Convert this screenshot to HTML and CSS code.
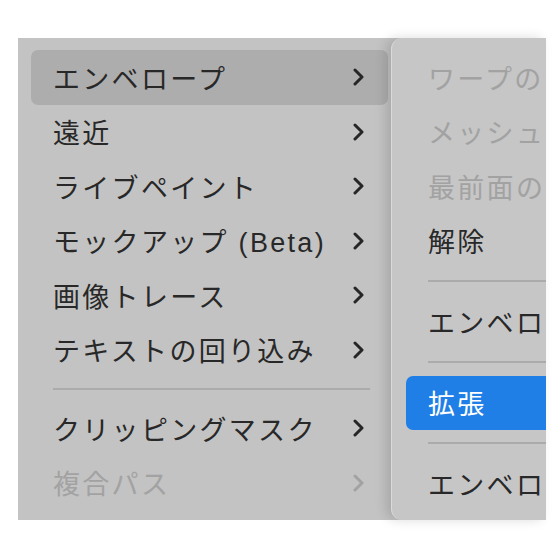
FILE: index.html
```html
<!DOCTYPE html>
<html lang="ja">
<head>
<meta charset="utf-8">
<link rel="stylesheet" href="styles.css">
</head>
<body>
<div class="stage">
  <div class="menu main">
    <div class="item active"><span class="label">エンベロープ</span><svg class="chev" viewBox="0 0 11 18"><path d="M2 2 L9 9 L2 16"/></svg></div>
    <div class="item"><span class="label">遠近</span><svg class="chev" viewBox="0 0 11 18"><path d="M2 2 L9 9 L2 16"/></svg></div>
    <div class="item"><span class="label">ライブペイント</span><svg class="chev" viewBox="0 0 11 18"><path d="M2 2 L9 9 L2 16"/></svg></div>
    <div class="item"><span class="label">モックアップ (Beta)</span><svg class="chev" viewBox="0 0 11 18"><path d="M2 2 L9 9 L2 16"/></svg></div>
    <div class="item"><span class="label">画像トレース</span><svg class="chev" viewBox="0 0 11 18"><path d="M2 2 L9 9 L2 16"/></svg></div>
    <div class="item"><span class="label">テキストの回り込み</span><svg class="chev" viewBox="0 0 11 18"><path d="M2 2 L9 9 L2 16"/></svg></div>
    <div class="sep main-sep"></div>
    <div class="item"><span class="label">クリッピングマスク</span><svg class="chev" viewBox="0 0 11 18"><path d="M2 2 L9 9 L2 16"/></svg></div>
    <div class="item disabled"><span class="label">複合パス</span><svg class="chev" viewBox="0 0 11 18"><path d="M2 2 L9 9 L2 16"/></svg></div>
  </div>
  <div class="menu sub">
    <div class="item disabled"><span class="label">ワープの</span></div>
    <div class="item disabled"><span class="label">メッシュ</span></div>
    <div class="item disabled"><span class="label">最前面の</span></div>
    <div class="item"><span class="label">解除</span></div>
    <div class="sep"></div>
    <div class="item"><span class="label">エンベロ</span></div>
    <div class="sep"></div>
    <div class="item selected"><span class="label">拡張</span></div>
    <div class="sep"></div>
    <div class="item"><span class="label">エンベロ</span></div>
  </div>
</div>
</body>
</html>
```

FILE: styles.css
```css
html, body {
  margin: 0;
  padding: 0;
  background: #ffffff;
}
body {
  width: 560px;
  height: 560px;
  overflow: hidden;
  font-family: "Liberation Sans", "Noto Sans CJK JP", sans-serif;
  font-size: 27px;
  color: #282828;
}
.stage {
  position: relative;
  padding: 38px 0 0 18px;
}
.menu {
  box-sizing: border-box;
  background: #c3c3c3;
  display: flex;
  flex-direction: column;
}
.main {
  width: 383px;
  height: 482px;
  padding: 12px 13px 10px 13px;
}
.item {
  height: 54.5px;
  flex: none;
  display: flex;
  align-items: center;
  justify-content: space-between;
  padding: 0 13px 0 22px;
  box-sizing: border-box;
  border-radius: 7px;
  white-space: nowrap;
}
.item .label {
  letter-spacing: 2.3px;
}
.main .item.active {
  background: #adadad;
}
.chev {
  width: 11px;
  height: 18px;
  flex: none;
  margin-right: 11px;
}
.chev path {
  fill: none;
  stroke: #262626;
  stroke-width: 3;
  stroke-linecap: round;
  stroke-linejoin: round;
}
.disabled {
  color: #a2a2a2;
}
.disabled .chev path {
  stroke: #a2a2a2;
}
.sep {
  height: 26.5px;
  flex: none;
  display: flex;
  align-items: center;
  margin-left: 22px;
}
.sep::after {
  content: "";
  display: block;
  width: 100%;
  height: 2px;
  background: #ababab;
}
.main-sep {
  height: 24px;
  margin-right: 18px;
}
.sub {
  position: absolute;
  left: 391px;
  top: 38px;
  width: 155px;
  height: 482px;
  background: #c6c6c6;
  border-radius: 11px 0 0 11px;
  padding: 12px 0 10px 14px;
  overflow: hidden;
  box-shadow: -5px 0 12px rgba(0, 0, 0, 0.14);
  border-left: 1px solid rgba(255, 255, 255, 0.35);
}
.sub .item {
  padding-left: 22px;
  border-radius: 7px 0 0 7px;
  justify-content: flex-start;
}
.sub .item.selected {
  background: #1f7fe6;
  color: #ffffff;
}
```
